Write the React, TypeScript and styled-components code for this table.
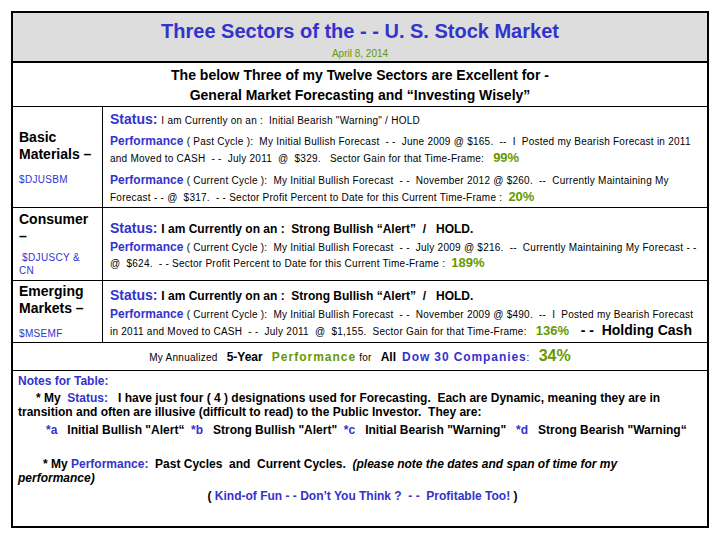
import React from "react";
import styled, { createGlobalStyle } from "styled-components";

const BLUE = "#3333cc";
const GREEN = "#669900";

const GlobalStyle = createGlobalStyle`
  html, body { margin: 0; padding: 0; background: #ffffff; }
  body { font-family: "Liberation Sans", Arial, sans-serif; color: #000000; }
`;

const Page = styled.div`
  padding: 11px 0 0 11px;
`;

const Frame = styled.div`
  width: 698px;
  height: 517px;
  box-sizing: border-box;
  border: 2px solid #000;
  display: flex;
  flex-direction: column;
`;

const Header = styled.header`
  height: 50px;
  box-sizing: border-box;
  background: #dddddd;
  border-bottom: 2px solid #000;
  padding-top: 6px;
  text-align: center;
`;

const Title = styled.h1`
  margin: 0;
  font-size: 20px;
  line-height: 24px;
  font-weight: bold;
  color: ${BLUE};
`;

const DateLine = styled.div`
  margin-top: 5px;
  font-size: 10px;
  line-height: 12px;
  color: ${GREEN};
`;

const Intro = styled.div`
  height: 44px;
  box-sizing: border-box;
  border-bottom: 1px solid #000;
  padding-top: 2px;
  text-align: center;
  font-size: 14px;
  font-weight: bold;
  line-height: 20px;
`;

const SectorRow = styled.div<{ $h: number }>`
  display: grid;
  grid-template-columns: 90px 1fr;
  height: ${(p) => p.$h}px;
  box-sizing: border-box;
  border-bottom: 1px solid #000;
`;

const LabelCell = styled.div`
  border-right: 1px solid #000;
  padding-left: 6px;
  display: flex;
  flex-direction: column;
  justify-content: center;
`;

const Name = styled.div`
  font-size: 14px;
  font-weight: bold;
  line-height: 17px;
  white-space: pre;
`;

const Ticker = styled.div<{ $mt: number }>`
  margin-top: ${(p) => p.$mt}px;
  font-size: 10px;
  line-height: 13px;
  letter-spacing: 0.33px;
  color: ${BLUE};
  white-space: pre;
`;

const BodyCell = styled.div`
  padding: 4px 0 0 7px;
  display: flex;
  flex-direction: column;
  justify-content: center;
`;

const Para = styled.div<{ $mt?: number }>`
  margin-top: ${(p) => p.$mt ?? 0}px;
`;

const Line = styled.div<{ $lh?: number }>`
  font-size: 10px;
  letter-spacing: 0.25px;
  line-height: ${(p) => p.$lh ?? 17}px;
  white-space: pre;
`;

const StatusLabel = styled.span`
  font-size: 14px;
  font-weight: bold;
  line-height: 1;
  letter-spacing: 0;
  color: ${BLUE};
`;

const PerfLabel = styled.span`
  font-size: 12px;
  font-weight: bold;
  line-height: 1;
  letter-spacing: 0;
  color: ${BLUE};
`;

const StrongText = styled.span`
  font-size: 12px;
  font-weight: bold;
  line-height: 1;
  letter-spacing: 0;
`;

const Pct = styled.span`
  font-size: 13px;
  font-weight: bold;
  line-height: 1;
  letter-spacing: 0;
  color: ${GREEN};
`;

const Holding = styled.span`
  font-size: 14px;
  font-weight: bold;
  line-height: 1;
  letter-spacing: 0;
`;

const Summary = styled.div`
  height: 28px;
  box-sizing: border-box;
  border-bottom: 1px solid #000;
  display: flex;
  align-items: center;
  justify-content: center;
  padding-top: 2px;
`;

const SummaryLine = styled.div`
  font-size: 10px;
  letter-spacing: 0.25px;
  line-height: 20px;
  white-space: pre;
`;

const SumBold = styled.span<{ $size: number; $color: string; $ls: number }>`
  font-size: ${(p) => p.$size}px;
  font-weight: bold;
  line-height: 1;
  color: ${(p) => p.$color};
  letter-spacing: ${(p) => p.$ls}px;
`;

const Notes = styled.div`
  flex: 1;
  padding: 3px 0 0 5px;
  font-size: 12px;
  font-weight: bold;
  line-height: 14px;
`;

const NoteLine = styled.div<{ $indent?: number; $mt?: number; $center?: boolean }>`
  white-space: pre;
  padding-left: ${(p) => p.$indent ?? 0}px;
  margin-top: ${(p) => p.$mt ?? 0}px;
  text-align: ${(p) => (p.$center ? "center" : "left")};
`;

const NoteHead = styled.span`
  color: ${BLUE};
`;

const Blue = styled.span`
  color: ${BLUE};
`;

const Em = styled.span`
  font-style: italic;
`;

export default function App() {
  return (
    <>
      <GlobalStyle />
      <Page>
        <Frame>
          <Header>
            <Title>Three Sectors of the - - U. S. Stock Market</Title>
            <DateLine>April 8, 2014</DateLine>
          </Header>

          <Intro>
            <div>The below Three of my Twelve Sectors are Excellent for -</div>
            <div>General Market Forecasting and “Investing Wisely”</div>
          </Intro>

          <SectorRow $h={101}>
            <LabelCell>
              <Name>Basic</Name>
              <Name>Materials –</Name>
              <Ticker $mt={10}>$DJUSBM</Ticker>
            </LabelCell>
            <BodyCell>
              <Line>
                <StatusLabel>Status: </StatusLabel>I am Currently on an :  Initial Bearish "Warning" / HOLD
              </Line>
              <Para $mt={4}>
                <Line>
                  <PerfLabel>Performance </PerfLabel>( Past Cycle ):  My Initial Bullish Forecast  - -  June 2009 @ $165.  --  I  Posted my Bearish Forecast in 2011
                </Line>
                <Line>
                  and Moved to CASH  - -  July 2011  @  $329.   Sector Gain for that Time-Frame:   <Pct>99%</Pct>
                </Line>
              </Para>
              <Para $mt={5}>
                <Line>
                  <PerfLabel>Performance </PerfLabel>( Current Cycle ):  My Initial Bullish Forecast  - -  November 2012 @ $260.  --  Currently Maintaining My
                </Line>
                <Line>
                  Forecast - - @  $317.  - - Sector Profit Percent to Date for this Current Time-Frame :  <Pct>20%</Pct>
                </Line>
              </Para>
            </BodyCell>
          </SectorRow>

          <SectorRow $h={73}>
            <LabelCell>
              <Name>Consumer</Name>
              <Name>–</Name>
              <Ticker $mt={6}>{" $DJUSCY &"}</Ticker>
              <Ticker $mt={0}>CN</Ticker>
            </LabelCell>
            <BodyCell>
              <Line $lh={18}>
                <StatusLabel>Status: </StatusLabel>
                <StrongText>I am Currently on an :  Strong Bullish “Alert”  /   HOLD.</StrongText>
              </Line>
              <Line>
                <PerfLabel>Performance </PerfLabel>( Current Cycle ):  My Initial Bullish Forecast  - -  July 2009 @ $216.  --  Currently Maintaining My Forecast - -
              </Line>
              <Line $lh={16}>
                @  $624.  - - Sector Profit Percent to Date for this Current Time-Frame :  <Pct>189%</Pct>
              </Line>
            </BodyCell>
          </SectorRow>

          <SectorRow $h={62}>
            <LabelCell>
              <Name>Emerging</Name>
              <Name>Markets –</Name>
              <Ticker $mt={10}>$MSEMF</Ticker>
            </LabelCell>
            <BodyCell>
              <Line $lh={18}>
                <StatusLabel>Status: </StatusLabel>
                <StrongText>I am Currently on an :  Strong Bullish “Alert”  /   HOLD.</StrongText>
              </Line>
              <Line>
                <PerfLabel>Performance </PerfLabel>( Current Cycle ):  My Initial Bullish Forecast  - -  November 2009 @ $490.  --  I  Posted my Bearish Forecast
              </Line>
              <Line $lh={16}>
                in 2011 and Moved to CASH  - -  July 2011  @  $1,155.  Sector Gain for that Time-Frame:   <Pct>136%</Pct>
                <Holding>{"   - -  Holding Cash"}</Holding>
              </Line>
            </BodyCell>
          </SectorRow>

          <Summary>
            <SummaryLine>
              My Annualized   <SumBold $size={12} $color="#000" $ls={0}>5-Year</SumBold>{"   "}
              <SumBold $size={12} $color={GREEN} $ls={1}>Performance</SumBold> for   <SumBold $size={12} $color="#000" $ls={0}>All</SumBold>{"  "}
              <SumBold $size={12} $color={BLUE} $ls={0.9}>Dow 30 Companies</SumBold>:   <SumBold $size={16} $color={GREEN} $ls={0}>34%</SumBold>
            </SummaryLine>
          </Summary>

          <Notes>
            <NoteLine>
              <NoteHead>Notes for Table:</NoteHead>
            </NoteLine>
            <NoteLine $indent={18} $mt={3}>
              * My  <Blue>Status:</Blue>   I have just four ( 4 ) designations used for Forecasting.  Each are Dynamic, meaning they are in
            </NoteLine>
            <NoteLine>transition and often are illusive (difficult to read) to the Public Investor.  They are:</NoteLine>
            <NoteLine $indent={28} $mt={4}>
              <Blue>*a</Blue>   Initial Bullish "Alert“  <Blue>*b</Blue>   Strong Bullish "Alert"  <Blue>*c</Blue>   Initial Bearish "Warning"   <Blue>*d</Blue>   Strong Bearish "Warning“
            </NoteLine>
            <NoteLine $indent={25} $mt={20}>
              * My <Blue>Performance:</Blue>  Past Cycles  and  Current Cycles.  <Em>(please note the dates and span of time for my</Em>
            </NoteLine>
            <NoteLine>
              <Em>performance)</Em>
            </NoteLine>
            <NoteLine $center $mt={4}>
              ( <Blue>Kind-of Fun - - Don’t You Think ?  - -  Profitable Too!</Blue> )
            </NoteLine>
          </Notes>
        </Frame>
      </Page>
    </>
  );
}
